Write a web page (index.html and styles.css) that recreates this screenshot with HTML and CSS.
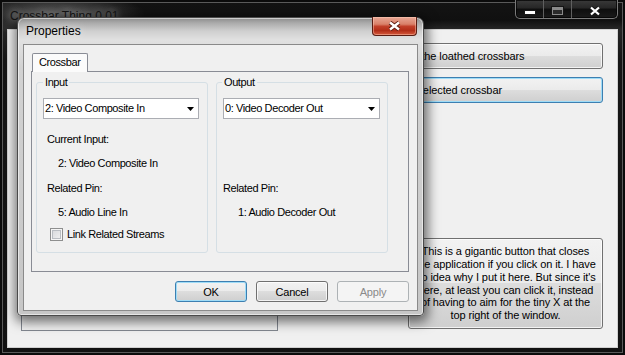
FILE: index.html
```html
<!DOCTYPE html>
<html lang="en">
<head>
<meta charset="utf-8">
<title>Crossbar Thing 0.01</title>
<link rel="stylesheet" href="styles.css">
</head>
<body>
<div class="desktop">
  <div class="mainwin">
    <div class="main-titlebar">
      <span class="main-title">Crossbar Thing 0.01</span>
      <div class="caption">
        <span class="cb cb-min"><svg width="12" height="5" viewBox="0 0 12 5"><rect x="0.5" y="0.5" width="11" height="4" fill="#fff" stroke="#1a1a1a"/></svg></span>
        <span class="cb cb-max"><svg width="13" height="10" viewBox="0 0 13 10"><rect x="0.5" y="0.5" width="12" height="9" fill="#2a2a2a" stroke="#151515"/><rect x="1.5" y="1.5" width="10" height="7" fill="none" stroke="#8a8a8a"/><rect x="2" y="2" width="9" height="2" fill="#8a8a8a"/></svg></span>
        <span class="cb cb-close"><svg width="12" height="10" viewBox="0 0 12 10"><path d="M2 1.5L10 8.5M10 1.5L2 8.5" stroke="#1a1a1a" stroke-width="4"/><path d="M2 1.5L10 8.5M10 1.5L2 8.5" stroke="#fff" stroke-width="2.2"/></svg></span>
      </div>
    </div>
    <div class="main-client">
      <div class="main-panel"></div>
      <div class="main-right">
        <button class="wbtn">Enumerate the loathed crossbars</button>
        <button class="wbtn def">Open selected crossbar</button>
        <button class="wbtn giant">This is a gigantic button that closes<br>the application if you click on it. I have<br>no idea why I put it here. But since it's<br>here, at least you can click it, instead<br>of having to aim for the tiny X at the<br>top right of the window.</button>
      </div>
    </div>
  </div>

  <div class="dialog">
    <div class="dlg-titlebar">
      <span class="dlg-title">Properties</span>
      <span class="dlg-close"><svg width="13" height="10" viewBox="0 0 13 10"><path d="M2 1.5L11 8.5M11 1.5L2 8.5" stroke="#5a1a10" stroke-width="4.2"/><path d="M2 1.5L11 8.5M11 1.5L2 8.5" stroke="#fff" stroke-width="2.4"/></svg></span>
    </div>
    <div class="dlg-client">
      <div class="tabstrip"><div class="tab">Crossbar</div></div>
      <div class="tabpage">
        <div class="group g-input">
          <span class="legend">Input</span>
          <div class="combo"><span>2: Video Composite In</span><svg width="7" height="4" viewBox="0 0 7 4"><path d="M0 0H7L3.5 4Z" fill="#000"/></svg></div>
          <span class="lbl">Current Input:</span>
          <span class="val">2: Video Composite In</span>
          <span class="lbl lbl-r">Related Pin:</span>
          <span class="val">5: Audio Line In</span>
          <label class="check"><span class="box"></span>Link Related Streams</label>
        </div>
        <div class="group g-output">
          <span class="legend">Output</span>
          <div class="combo"><span>0: Video Decoder Out</span><svg width="7" height="4" viewBox="0 0 7 4"><path d="M0 0H7L3.5 4Z" fill="#000"/></svg></div>
          <span class="lbl lbl-out">Related Pin:</span>
          <span class="val">1: Audio Decoder Out</span>
        </div>
      </div>
      <div class="dlg-buttons">
        <button class="btn def">OK</button>
        <button class="btn">Cancel</button>
        <button class="btn" disabled>Apply</button>
      </div>
    </div>
  </div>
</div>
</body>
</html>
```

FILE: styles.css
```css
* { box-sizing: border-box; }
html, body { margin: 0; padding: 0; }
body {
  width: 625px;
  height: 355px;
  overflow: hidden;
  background: #000;
  font-family: "Liberation Sans", Arial, sans-serif;
  font-size: 11px;
  color: #000;
}
.desktop { position: relative; width: 625px; height: 355px; }

/* ---------- main (back) window ---------- */
.mainwin {
  width: 625px;
  height: 355px;
  display: flex;
  flex-direction: column;
  padding: 0 8px 8px;
  background:
    radial-gradient(ellipse 90px 22px at 55px 14px, rgba(150,150,150,.55), rgba(150,150,150,0) 100%),
    linear-gradient(180deg, #141414 0, #101010 20px, #262626 29px, #161616 60px, #111 100%);
  box-shadow: inset 0 0 0 2px #0b0b0b, inset 0 0 0 3px #5a5a5a;
}
.main-titlebar {
  height: 30px;
  margin: 0 -8px;
  display: flex;
  align-items: flex-start;
  padding-left: 10px;
}
.main-title {
  padding-top: 9px;
  font-size: 12px;
  line-height: 15px;
  color: #151515;
  text-shadow: 0 0 6px rgba(255,255,255,.55), 0 0 12px rgba(255,255,255,.4);
}
.caption {
  margin-left: auto;
  margin-right: 7px;
  width: 103px;
  height: 19px;
  display: flex;
  border: 1px solid #7a7a7a;
  border-top: none;
  border-radius: 0 0 5px 5px;
  overflow: hidden;
  background: linear-gradient(180deg, #3a3a3a 0, #262626 45%, #0e0e0e 50%, #1a1a1a 100%);
  box-shadow: inset 0 0 0 1px rgba(0,0,0,.7);
}
.cb { display: flex; justify-content: center; align-items: flex-start; }
.cb-min { width: 28px; border-right: 1px solid #5f5f5f; padding-top: 10px; }
.cb-max { width: 28px; border-right: 1px solid #5f5f5f; padding-top: 6px; }
.cb-close { flex: 1; padding-top: 6px; }

.main-client {
  flex: 1;
  background: #f0f0f0;
  box-shadow: 0 0 0 1px rgba(255,255,255,.8);
  display: grid;
  grid-template-columns: 257px 1fr;
  column-gap: 9px;
  padding: 13px 14px 16px 13px;
}
.main-panel { border: 1px solid #828790; }
.main-right { display: flex; flex-direction: column; }

.wbtn {
  font: inherit;
  color: #000;
  padding: 0;
  height: 26px;
  border: 1px solid #707070;
  border-radius: 3px;
  background: linear-gradient(180deg, #f2f2f2 0%, #ebebeb 49%, #dddddd 50%, #cfcfcf 100%);
  box-shadow: inset 0 0 0 1px rgba(255,255,255,.75);
  letter-spacing: -0.1px;
}
.wbtn + .wbtn { margin-top: 8px; }
.wbtn.def {
  border-color: #3c7fb1;
  box-shadow: inset 0 0 0 1px #9fdcf7;
}
.main-right .wbtn.giant {
  margin-top: auto;
  margin-bottom: 2px;
  align-self: flex-end;
  width: 195px;
  height: 91px;
  line-height: 12.8px;
  white-space: nowrap;
  text-align: center;
}

/* ---------- dialog ---------- */
.dialog {
  position: absolute;
  left: 17px;
  top: 17px;
  width: 407px;
  height: 299px;
  display: flex;
  flex-direction: column;
  padding: 0 6px 5px;
  border: 1px solid #4a4a4a;
  border-radius: 7px 7px 4px 4px;
  background: linear-gradient(180deg, #8b8b8b 0, #ababab 5px, #cfcfcf 13px, #e1e1e1 22px, #d2d2d2 50px, #c6c6c6 100%);
  box-shadow: inset 0 0 0 1px rgba(255,255,255,.55), 1px 3px 12px 3px rgba(0,0,0,.55);
}
.dlg-titlebar {
  height: 27px;
  display: flex;
  align-items: flex-start;
}
.dlg-title {
  padding: 6px 0 0 2px;
  font-size: 12px;
  line-height: 15px;
  color: #000;
  text-shadow: 0 0 8px rgba(255,255,255,.9);
}
.dlg-close {
  margin-left: auto;
  margin-top: -1px;
  width: 45px;
  height: 19px;
  display: flex;
  justify-content: center;
  align-items: center;
  border: 1px solid #5a1c12;
  border-top: none;
  border-radius: 0 0 4px 4px;
  background: linear-gradient(180deg, #e8a896 0%, #d98069 40%, #c2402a 52%, #b22e18 75%, #d5593c 100%);
  box-shadow: inset 0 0 0 1px rgba(255,210,190,.45);
}

.dlg-client {
  flex: 1;
  display: flex;
  flex-direction: column;
  padding: 8px 8px 8px 7px;
  background: #f0f0f0;
  box-shadow: 0 0 0 1px #8a8a8a;
  letter-spacing: -0.4px;
}

.tabstrip { height: 18px; display: flex; align-items: flex-start; padding-left: 1px; }
.tab {
  position: relative;
  z-index: 1;
  width: 56px;
  height: 19px;
  padding-left: 6px;
  line-height: 17px;
  border: 1px solid #898c95;
  border-bottom: none;
  border-radius: 2px 2px 0 0;
  background: #fbfbfb;
}
.tabpage {
  height: 201px;
  display: flex;
  gap: 8px;
  padding: 10px 0 0 4px;
  border: 1px solid #898c95;
  background: #f0f0f0;
}

.group {
  width: 172px;
  height: 171px;
  display: flex;
  flex-direction: column;
  align-items: flex-start;
  border: 1px solid #d5dfe5;
  border-radius: 3px;
}
.legend {
  margin: -8px 0 0 6px;
  padding: 0 2px;
  line-height: 14px;
  background: #f0f0f0;
}
.g-output .legend { margin-left: 5px; }

.combo {
  margin: 9px 0 0 6px;
  width: 156px;
  height: 21px;
  display: flex;
  align-items: center;
  justify-content: space-between;
  padding: 0 4px 0 1px;
  background: #fff;
  border: 1px solid #abadb3;
  line-height: 19px;
}
.g-output .combo { width: 157px; }

.lbl { margin: 13px 0 0 10px; line-height: 14px; }
.lbl-r { margin-top: 11px; }
.lbl-out { margin: 62px 0 0 6px; }
.val { margin: 10px 0 0 21px; line-height: 14px; }

.check {
  margin: 8px 0 0 13px;
  display: flex;
  align-items: center;
  gap: 4px;
  line-height: 14px;
}
.box {
  width: 13px;
  height: 13px;
  border: 1px solid #8e8f8f;
  background: linear-gradient(135deg, #d4d6d9 0%, #f3f3f3 100%);
  box-shadow: inset 0 0 0 1px #f5f5f5, inset 0 0 0 2px #b9bdc2;
}

.dlg-buttons {
  margin-top: 9px;
  display: flex;
  justify-content: flex-end;
  gap: 9px;
}
.btn {
  font: inherit;
  letter-spacing: -0.2px;
  color: #000;
  padding: 0;
  width: 72px;
  height: 21px;
  border: 1px solid #707070;
  border-radius: 3px;
  background: linear-gradient(180deg, #f2f2f2 0%, #ebebeb 49%, #dddddd 50%, #cfcfcf 100%);
  box-shadow: inset 0 0 0 1px rgba(255,255,255,.75);
}
.btn.def {
  border-color: #3c7fb1;
  box-shadow: inset 0 0 0 1px #9fdcf7;
}
.btn:disabled {
  border-color: #adb2b5;
  background: #f4f4f4;
  color: #8a8a8a;
  box-shadow: none;
}
```
